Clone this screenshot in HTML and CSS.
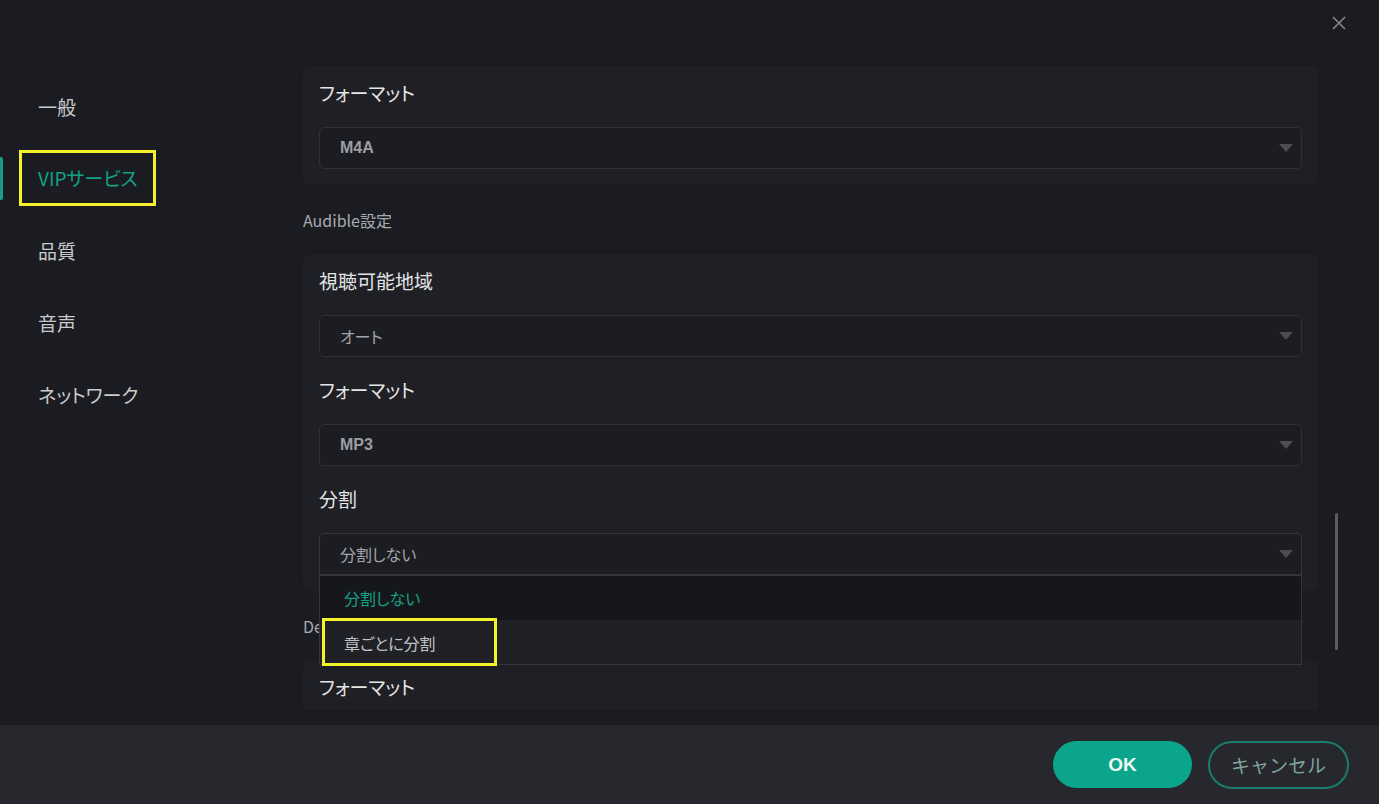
FILE: index.html
```html
<!DOCTYPE html>
<html lang="ja">
<head>
    <meta charset="UTF-8">
    <meta name="viewport" content="width=device-width, initial-scale=1.0">
    <title>設定</title>
    <link rel="stylesheet" href="styles.css">
</head>
<body>

<div class="window">
    <div class="topbar">
        <button class="close" aria-label="閉じる">
            <svg width="16" height="16" viewBox="0 0 16 16"><path d="M2 2 L14 14 M14 2 L2 14" stroke="#85868b" stroke-width="1.6" fill="none"/></svg>
        </button>
    </div>

    <div class="main">
        <nav class="sidebar">
            <div class="nav-item">一般</div>
            <div class="nav-item active"><span class="mark">VIPサービス</span></div>
            <div class="nav-item">品質</div>
            <div class="nav-item">音声</div>
            <div class="nav-item">ネットワーク</div>
        </nav>

        <div class="content">
            <div class="scroll">
                <div class="card">
                    <div class="field-label">フォーマット</div>
                    <div class="select"><span class="latin">M4A</span><i class="arrow"></i></div>
                </div>

                <div class="section-title">Audible設定</div>
                <div class="card">
                    <div class="field-label">視聴可能地域</div>
                    <div class="select"><span>オート</span><i class="arrow"></i></div>
                    <div class="field-label">フォーマット</div>
                    <div class="select"><span class="latin">MP3</span><i class="arrow"></i></div>
                    <div class="field-label">分割</div>
                    <div class="select open">
                        <span>分割しない</span><i class="arrow"></i>
                        <!-- open dropdown menu -->
                        <ul class="options">
                            <li class="selected">分割しない</li>
                            <li class="hover"><span class="mark">章ごとに分割</span></li>
                        </ul>
                    </div>
                </div>

                <div class="section-title">Deezer設定</div>
                <div class="card">
                    <div class="field-label">フォーマット</div>
                    <div class="select"><span class="latin">MP3</span><i class="arrow"></i></div>
                </div>
            </div>
            <div class="scrollbar"></div>
        </div>
    </div>

    <div class="footer">
        <button class="btn ok">OK</button>
        <button class="btn cancel">キャンセル</button>
    </div>
</div>

</body>
</html>
```

FILE: styles.css
```css
body {
    margin: 0;
    background-color: #1b1c21;
    font-family: "Noto Sans CJK JP", "Liberation Sans", sans-serif;
    font-feature-settings: "palt";
    color: #d8d9dc;
}
ul {
    margin: 0;
    padding: 0;
    list-style: none;
}
button {
    font-family: inherit;
    cursor: pointer;
}

.window {
    width: 1379px;
    height: 804px;
    display: flex;
    flex-direction: column;
    overflow: hidden;
}

.topbar {
    height: 50px;
    display: flex;
    justify-content: flex-end;
    align-items: flex-start;
    padding-right: 32px;
}
.close {
    margin-top: 15px;
    background: none;
    border: none;
    padding: 0;
    width: 16px;
    height: 16px;
}

.main {
    height: 660px;
    display: flex;
}

/* left menu */
.sidebar {
    width: 265px;
    padding: 20px 0 0 38px;
    flex-shrink: 0;
}
.nav-item {
    height: 72px;
    display: flex;
    align-items: center;
    font-size: 19px;
    color: #c9cacd;
    position: relative;
}
.nav-item.active {
    color: #13a086;
}
.nav-item.active::before {
    content: "";
    position: absolute;
    left: -38px;
    top: 15px;
    width: 3px;
    height: 43px;
    background-color: #13a086;
    border-radius: 0 2px 2px 0;
}
.mark {
    border: 3px solid #f4f22c;
    line-height: 22px;
}
.nav-item .mark {
    margin-left: -19px;
    padding: 14px 15px 14px 16px;
}

/* right settings column */
.content {
    flex: 1;
    position: relative;
    padding-right: 61px;
}
.scroll {
    height: 100%;
    overflow: hidden;
    padding-top: 16px;
    box-sizing: border-box;
}
.card {
    background-color: #1f2025;
    border-radius: 8px;
    padding: 16px 16px 16px;
}
.field-label {
    font-size: 19px;
    line-height: 22px;
    color: #e4e5e7;
    margin-bottom: 23px;
}
.select + .field-label {
    margin-top: 22px;
}
.section-title {
    font-size: 16px;
    line-height: 22px;
    color: #a8aaaf;
    margin: 24px 0 23px;
}

.select {
    height: 42px;
    box-sizing: border-box;
    border: 1px solid #303136;
    border-radius: 5px;
    background-color: #1c1d22;
    display: flex;
    align-items: center;
    padding: 0 8px 0 20px;
    font-size: 16px;
    color: #a2a4a9;
    position: relative;
}
.select .latin {
    font-family: "Liberation Sans", sans-serif;
    font-weight: bold;
    color: #9c9ea4;
}
.arrow {
    margin-left: auto;
    width: 0;
    height: 0;
    border-left: 7px solid transparent;
    border-right: 7px solid transparent;
    border-top: 8px solid #4c4d52;
}
.select.open {
    border-radius: 5px 5px 0 0;
    border-color: #35363b;
}

.options {
    position: absolute;
    top: 41px;
    left: -1px;
    right: -1px;
    z-index: 5;
    border: 1px solid #35363b;
    background-color: #202126;
}
.options li {
    height: 44px;
    display: flex;
    align-items: center;
    padding-left: 24px;
    font-size: 16px;
    color: #c2c3c7;
}
.options li.selected {
    background-color: #16171b;
    color: #16a087;
}
.options li.hover {
    padding-left: 2px;
    background-color: #202126;
}
.options .mark {
    padding: 11px 58px 9px 19px;
}

.scrollbar {
    position: absolute;
    right: 41px;
    top: 463px;
    width: 3px;
    height: 137px;
    border-radius: 2px;
    background-color: #5b5c61;
}

/* bottom button bar */
.footer {
    margin-top: 15px;
    flex: 1;
    background-color: #27282d;
    display: flex;
    align-items: center;
    justify-content: flex-end;
    gap: 16px;
    padding-right: 30px;
}
.btn {
    height: 47px;
    border-radius: 24px;
    font-size: 19px;
}
.ok {
    width: 139px;
    border: none;
    background-color: #0aa58b;
    color: #eef8f6;
    font-family: "Liberation Sans", sans-serif;
    font-weight: bold;
}
.cancel {
    width: 141px;
    height: 48px;
    background: none;
    border: 2px solid #1a7d6c;
    color: #7fa59c;
}
```
